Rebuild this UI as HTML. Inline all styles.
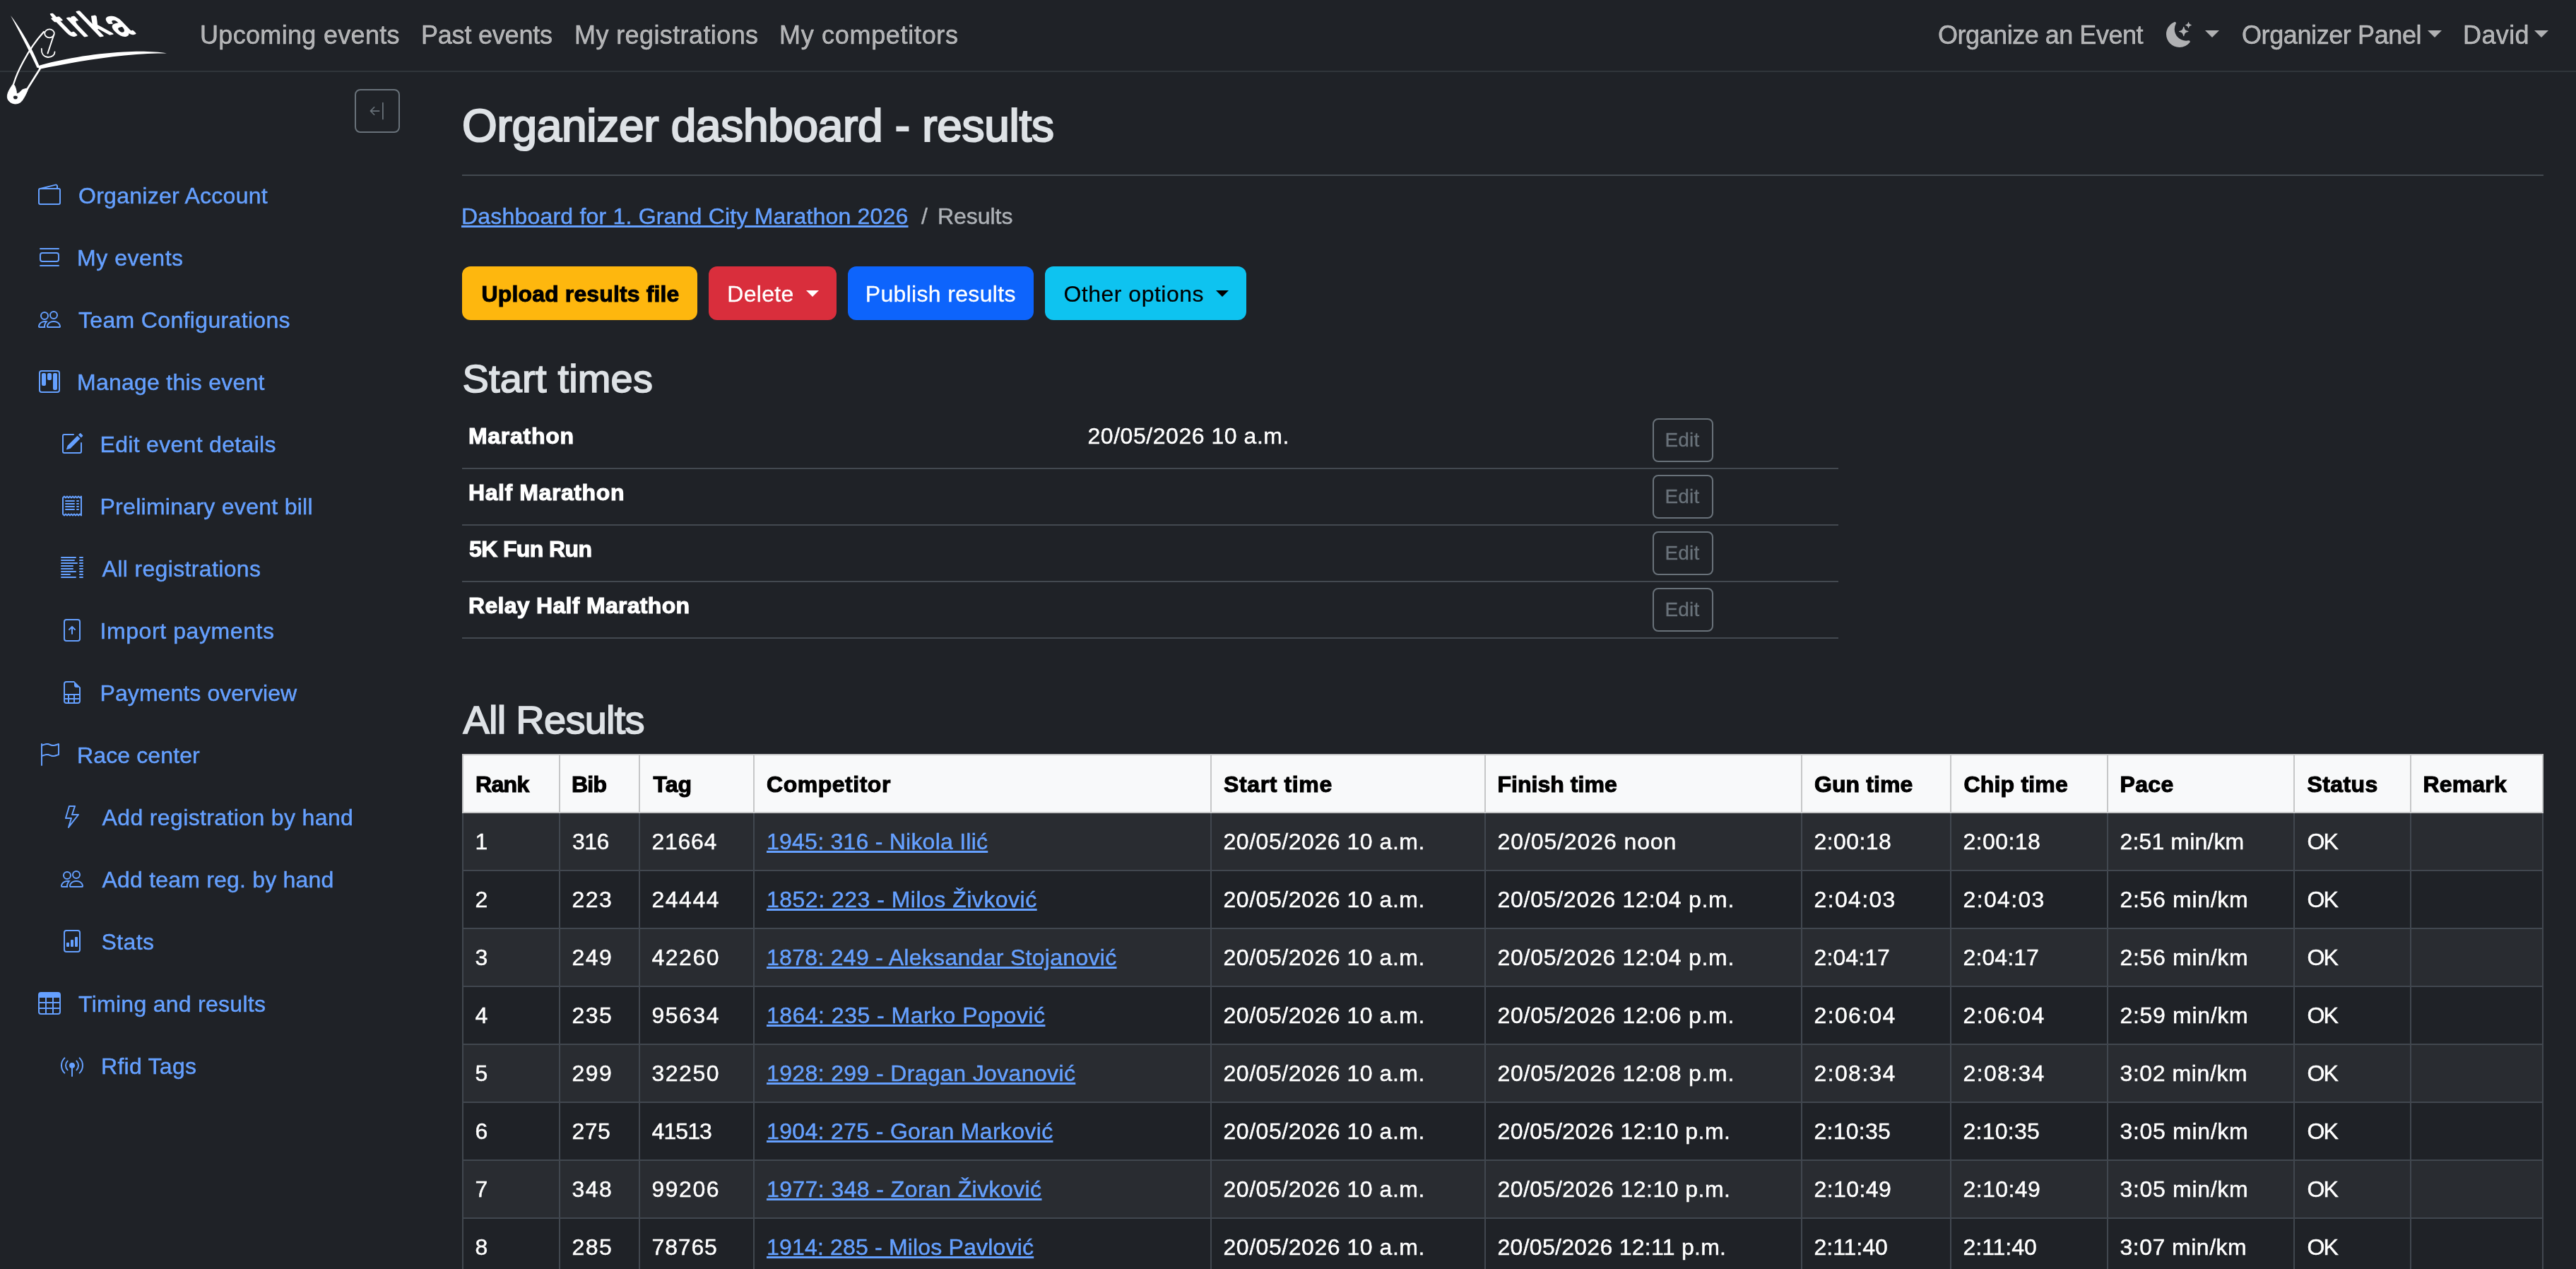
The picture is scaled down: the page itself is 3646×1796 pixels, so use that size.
<!DOCTYPE html><html lang="en"><head><meta charset="utf-8"><title>Organizer dashboard - results</title>
<meta name="viewport" content="width=device-width, initial-scale=1">
<style>
*{box-sizing:border-box}
html,body{margin:0;padding:0}
html{background:#1f2227}
body{width:3646px;height:1796px;overflow:hidden;background:#1f2227;color:#dee2e6;font-family:"Liberation Sans", sans-serif;font-size:32px;line-height:48px;position:relative;-webkit-text-stroke:.45px currentColor;will-change:transform}
a{color:#65a0ff;text-decoration:underline;text-decoration-thickness:3px;text-underline-offset:2px}
ul,ol{list-style:none;margin:0;padding:0}
span,a{white-space:nowrap}
svg.bi{display:block;flex:none}
/* caret */
.caret{display:inline-block;width:0;height:0;border-left:9.6px solid transparent;border-right:9.6px solid transparent;border-top:9.6px solid currentColor;vertical-align:middle}
.caret.c36{border-left-width:10.3px;border-right-width:10.3px;border-top-width:10.5px;margin-left:10px;position:relative;top:-4px}
.caret.c32{margin-left:18px;position:relative;top:-1px;border-left-width:9px;border-right-width:9px;border-top-width:9.5px}
/* top navbar */
.topbar{position:absolute;left:0;top:0;width:3646px;height:102px;border-bottom:2px solid #30353a;font-size:36px;line-height:54px}
.topbar a{color:rgba(255,255,255,.65);text-decoration:none}
.brand{position:absolute;left:0;top:0;z-index:5;display:block;width:260px;height:160px}
.brand svg{display:block}
.navl li{position:absolute;top:23px;white-space:nowrap}
.navl li a{display:block}
.navr li{position:absolute;top:23px;white-space:nowrap}
.navr li a{display:block}
.moonlink{display:flex!important;align-items:center;height:54px}
.moonlink .moon{margin-top:-3px}
.caret.mooncaret{margin-left:19px;top:-2.5px}
/* sidebar */
.sidebar{position:absolute;left:0;top:102px;width:620px}
.collapse{position:absolute;left:502px;top:24px;width:64px;height:62px;border:2px solid #69727a;border-radius:8px;background:transparent;color:#69727a;padding:0;display:flex;align-items:center;justify-content:center}
.menu{position:absolute;left:0;top:131px;width:620px}
.menu li{height:88px}
.menu li a{display:flex;align-items:center;height:88px;text-decoration:none;color:#65a0ff;padding-left:54px}
.menu li.l1 a{padding-left:86px}
.menu li a svg{margin-right:25px;position:relative;top:-1px}
/* main */
main{position:absolute;left:654px;top:102px;width:2946px}
h1,h2{margin:0;font-weight:400;color:#dee2e6;white-space:nowrap}
h1{position:absolute;left:0;top:38px;font-size:64px;line-height:77px;-webkit-text-stroke:2.2px currentColor}
hr{position:absolute;left:0;top:145px;width:2946px;height:2px;border:0;margin:0;background:#434950}
.breadcrumb{position:absolute;left:0;top:180px;display:flex}
.breadcrumb .sep{padding:0 14px 0 17.5px;color:#adb1b6}
.breadcrumb .active{color:#adb1b6}
.btnrow{position:absolute;left:0;top:275px;display:flex;gap:16px}
.btn{display:flex;align-items:center;justify-content:center;height:76px;border-radius:12px;border:0;font-family:inherit;font-size:32px;line-height:48px;text-decoration:none;padding:2px 0 0;-webkit-text-stroke:.3px currentColor}
.btn.warning{background:#feb70e;color:#000;font-weight:700;-webkit-text-stroke:1px currentColor}
.btn.danger{background:#d92e3c;color:#fff}
.btn.primary{background:#0d64fc;color:#fff}
.btn.info{background:#0ec3f0;color:#000;-webkit-text-stroke:.2px currentColor}
h2{font-size:56px;line-height:67px;-webkit-text-stroke:1.6px currentColor}
h2.h-start{position:absolute;left:.5px;top:400px}
h2.h-all{position:absolute;left:1.5px;top:883px}
table{border-collapse:collapse;border-spacing:0}
.starts{position:absolute;left:0;top:482px;width:1948px;color:#fff;border-collapse:separate;border-spacing:0}
.starts th,.starts td{padding:9px 8px 0;border-bottom:2px solid #434950;vertical-align:top;text-align:left;height:80px}
.starts th{font-weight:700;width:877px;-webkit-text-stroke:1.1px currentColor;padding-left:10px}
.starts td.tm{width:808px}
.starts td.ed{padding:8px 0 0}
.btn-sm{display:block;width:86px;height:62px;border:2px solid #69727a;border-radius:8px;background:transparent;color:#69727a;font-family:inherit;font-size:28px;line-height:42px;padding:0 0 0 15.5px;text-align:left;margin-left:0;-webkit-text-stroke:.3px currentColor}
.results{position:absolute;left:0;top:965px;width:2944px;table-layout:fixed;color:#fff}
.results th,.results td{padding:16px 16px;border:2px solid #41474f;text-align:left;vertical-align:top;height:82px;overflow:hidden;white-space:nowrap}
.results thead th{padding:17px 16px 15px;background:#f8f9fa;color:#000;font-weight:700;border-color:#c6c7c8;-webkit-text-stroke:1.1px currentColor}
.results tbody tr:nth-child(odd) td{background:#292c31}

</style></head><body>
<nav class="topbar">
<a class="brand" href="#"><svg class="logo" width="260" height="160" viewBox="0 0 260 160" aria-label="trka logo">
<g fill="#fff" stroke="none">
<path d="M15 22 C24 33 36 53 44 68 C49 78 53 87 56.5 95.5 L52.5 96 C49 88 44 78 39.5 69 C32 54 23 37 15 22Z"/>
<path d="M53 93.5 C85 84 130 76 175 73.5 C200 72 222 73 236 75.5 C220 75.5 200 76 176 78.5 C132 83 88 91 55.5 98 Z"/>
<path stroke="#fff" stroke-width="1" stroke-linejoin="round" d="M18.9 118.2 C15 124 11 130 10.4 135.5 C9.9 141 13.5 145 18.5 146.4 C23 147.8 28.5 146.3 31.5 142 C35 137 38.5 130 40.2 124.4 L31.8 126.8 L26.8 131.8 L23.4 132.8 C23.5 128 22 123 18.9 118.2 Z M18.6 137 C18.2 139.2 19.6 140.8 21.8 140.9 C24 141 25.4 139.6 25.2 137.6 C25 135.8 23.6 135 21.8 135.1 C20 135.2 18.9 135.6 18.6 137 Z" fill-rule="evenodd"/>
</g>
<g fill="none" stroke="#fff" stroke-linecap="round">
<path d="M62 45 C52 56 41 72 33 87 C27 98 22 110 19.5 118" stroke-width="2.3"/>
<path d="M56.5 97.5 L39.5 124.5" stroke-width="2.6"/>
<ellipse cx="70" cy="47.3" rx="6.8" ry="6" stroke-width="1.8"/>
<path d="M76.3 49 L67.5 75.5" stroke-width="2"/>
<path d="M58.8 69 C58.5 75 61 80.5 68 81 C74 81 77.5 77.5 77.5 73.5" stroke-width="1.8"/>
</g>
<text x="0" y="0" rotate="-10" transform="translate(97,51.5) skewX(38)" font-family="'Liberation Sans', sans-serif" font-size="47" font-weight="400" fill="#fff" stroke="#fff" stroke-width="2.8" stroke-linejoin="round" letter-spacing="6.5">trka</text>
</svg></a>
<ul class="navl">
<li style="left:283px"><a style="letter-spacing:0.32px" href="#">Upcoming events</a></li>
<li style="left:596px"><a style="letter-spacing:-0.21px" href="#">Past events</a></li>
<li style="left:813px"><a style="letter-spacing:0.40px" href="#">My registrations</a></li>
<li style="left:1103px"><a style="letter-spacing:0.69px" href="#">My competitors</a></li>
</ul>
<ul class="navr">
<li style="left:2743px"><a style="letter-spacing:-0.48px" href="#">Organize an Event</a></li>
<li style="left:3066px"><a href="#" class="moonlink"><svg class="bi moon" width="36" height="36" viewBox="0 0 16 16" fill="currentColor"><path d="M6 .278a.77.77 0 0 1 .08.858 7.2 7.2 0 0 0-.878 3.46c0 4.021 3.278 7.277 7.318 7.277q.792-.001 1.533-.16a.79.79 0 0 1 .81.316.73.73 0 0 1-.031.893A8.35 8.35 0 0 1 8.344 16C3.734 16 0 12.286 0 7.71 0 4.266 2.114 1.312 5.124.06A.75.75 0 0 1 6 .278"/><path d="M10.794 3.148a.217.217 0 0 1 .412 0l.387 1.162c.173.518.579.924 1.097 1.097l1.162.387a.217.217 0 0 1 0 .412l-1.162.387a1.73 1.73 0 0 0-1.097 1.097l-.387 1.162a.217.217 0 0 1-.412 0l-.387-1.162A1.73 1.73 0 0 0 9.31 6.593l-1.162-.387a.217.217 0 0 1 0-.412l1.162-.387a1.73 1.73 0 0 0 1.097-1.097zM13.863.099a.145.145 0 0 1 .274 0l.258.774c.115.346.386.617.732.732l.774.258a.145.145 0 0 1 0 .274l-.774.258a1.16 1.16 0 0 0-.732.732l-.258.774a.145.145 0 0 1-.274 0l-.258-.774a1.16 1.16 0 0 0-.732-.732l-.774-.258a.145.145 0 0 1 0-.274l.774-.258c.346-.115.617-.386.732-.732z"/></svg><i class="caret c36 mooncaret"></i></a></li>
<li style="left:3173px"><a href="#"><span style="letter-spacing:-0.40px">Organizer Panel</span><i class="caret c36" style="margin-left:9px"></i></a></li>
<li style="left:3486px"><a href="#"><span style="letter-spacing:0.38px">David</span><i class="caret c36" style="margin-left:7px"></i></a></li>
</ul></nav>
<aside class="sidebar">
<button class="collapse" type="button"><svg class="bi" width="28" height="28" viewBox="0 0 16 16" fill="currentColor"><path d="M12.5 15a.5.5 0 0 1-.5-.5v-13a.5.5 0 0 1 1 0v13a.5.5 0 0 1-.5.5M10 8a.5.5 0 0 1-.5.5H3.707l2.147 2.146a.5.5 0 0 1-.708.708l-3-3a.5.5 0 0 1 0-.708l3-3a.5.5 0 1 1 .708.708L3.707 7.5H9.5a.5.5 0 0 1 .5.5"/></svg></button>
<ul class="menu">
<li class="l0"><a href="#"><svg class="bi" width="32" height="32" viewBox="0 0 16 16" fill="currentColor"><path d="M12.136.326A1.5 1.5 0 0 1 14 1.78V3h.5A1.5 1.5 0 0 1 16 4.5v9a1.5 1.5 0 0 1-1.5 1.5h-13A1.5 1.5 0 0 1 0 13.5v-9a1.5 1.5 0 0 1 1.432-1.499zM5.562 3H13V1.78a.5.5 0 0 0-.621-.484zM1.5 4a.5.5 0 0 0-.5.5v9a.5.5 0 0 0 .5.5h13a.5.5 0 0 0 .5-.5v-9a.5.5 0 0 0-.5-.5z"/></svg><span style="letter-spacing:0.28px">Organizer Account</span></a></li>
<li class="l0"><a href="#"><svg class="bi" width="32" height="32" viewBox="0 0 16 16" fill="currentColor"><path d="M3 4.5h10a2 2 0 0 1 2 2v3a2 2 0 0 1-2 2H3a2 2 0 0 1-2-2v-3a2 2 0 0 1 2-2m0 1a1 1 0 0 0-1 1v3a1 1 0 0 0 1 1h10a1 1 0 0 0 1-1v-3a1 1 0 0 0-1-1zM1 2a.5.5 0 0 1 .5-.5h13a.5.5 0 0 1 0 1h-13A.5.5 0 0 1 1 2m0 12a.5.5 0 0 1 .5-.5h13a.5.5 0 0 1 0 1h-13A.5.5 0 0 1 1 14"/></svg><span style="letter-spacing:0.53px;position:relative;left:-2px">My events</span></a></li>
<li class="l0"><a href="#"><svg class="bi" width="32" height="32" viewBox="0 0 16 16" fill="currentColor"><path d="M15 14s1 0 1-1-1-4-5-4-5 3-5 4 1 1 1 1zm-7.978-1L7 12.996c.001-.264.167-1.03.76-1.72C8.312 10.629 9.282 10 11 10c1.717 0 2.687.63 3.24 1.276.593.69.758 1.457.76 1.72l-.008.002-.014.002zM11 7a2 2 0 1 0 0-4 2 2 0 0 0 0 4m3-2a3 3 0 1 1-6 0 3 3 0 0 1 6 0M6.936 9.28a6 6 0 0 0-1.23-.247A7 7 0 0 0 5 9c-4 0-5 3-5 4q0 1 1 1h4.216A2.24 2.24 0 0 1 5 13c0-1.01.377-2.042 1.09-2.904.243-.294.526-.569.846-.816M4.92 10A5.5 5.5 0 0 0 4 13H1c0-.26.164-1.03.76-1.724.545-.636 1.492-1.256 3.16-1.275ZM1.5 5.5a3 3 0 1 1 6 0 3 3 0 0 1-6 0m3-2a2 2 0 1 0 0 4 2 2 0 0 0 0-4"/></svg><span style="letter-spacing:0.34px">Team Configurations</span></a></li>
<li class="l0"><a href="#"><svg class="bi" width="32" height="32" viewBox="0 0 16 16" fill="currentColor"><path d="M13.5 1a1 1 0 0 1 1 1v12a1 1 0 0 1-1 1h-11a1 1 0 0 1-1-1V2a1 1 0 0 1 1-1zm-11-1a2 2 0 0 0-2 2v12a2 2 0 0 0 2 2h11a2 2 0 0 0 2-2V2a2 2 0 0 0-2-2z"/><path d="M6.5 3a1 1 0 0 1 1-1h1a1 1 0 0 1 1 1v3a1 1 0 0 1-1 1h-1a1 1 0 0 1-1-1zm-4 0a1 1 0 0 1 1-1h1a1 1 0 0 1 1 1v7a1 1 0 0 1-1 1h-1a1 1 0 0 1-1-1zm8 0a1 1 0 0 1 1-1h1a1 1 0 0 1 1 1v10a1 1 0 0 1-1 1h-1a1 1 0 0 1-1-1z"/></svg><span style="letter-spacing:0.25px;position:relative;left:-2px">Manage this event</span></a></li>
<li class="l1"><a href="#"><svg class="bi" width="32" height="32" viewBox="0 0 16 16" fill="currentColor"><path d="M15.502 1.94a.5.5 0 0 1 0 .706L14.459 3.69l-2-2L13.502.646a.5.5 0 0 1 .707 0l1.293 1.293zm-1.75 2.456-2-2L4.939 9.21a.5.5 0 0 0-.121.196l-.805 2.414a.25.25 0 0 0 .316.316l2.414-.805a.5.5 0 0 0 .196-.12l6.813-6.814z"/><path d="M1 13.5A1.5 1.5 0 0 0 2.5 15h11a1.5 1.5 0 0 0 1.5-1.5v-6a.5.5 0 0 0-1 0v6a.5.5 0 0 1-.5.5h-11a.5.5 0 0 1-.5-.5v-11a.5.5 0 0 1 .5-.5H9a.5.5 0 0 0 0-1H2.5A1.5 1.5 0 0 0 1 2.5z"/></svg><span style="letter-spacing:0.31px;position:relative;left:-1.5px">Edit event details</span></a></li>
<li class="l1"><a href="#"><svg class="bi" width="32" height="32" viewBox="0 0 16 16" fill="none" stroke="currentColor" stroke-width="1" stroke-linecap="round" stroke-linejoin="round"><path d="M1.5 2.2 L2.50 1.30 L3.50 2.20 L4.50 1.30 L5.50 2.20 L6.50 1.30 L7.50 2.20 L8.50 1.30 L9.50 2.20 L10.50 1.30 L11.50 2.20 L12.50 1.30 L13.50 2.20 L14.50 1.30 L14.5 2.2 L14.5 13.8 L14.50 14.70 L13.50 13.80 L12.50 14.70 L11.50 13.80 L10.50 14.70 L9.50 13.80 L8.50 14.70 L7.50 13.80 L6.50 14.70 L5.50 13.80 L4.50 14.70 L3.50 13.80 L2.50 14.70 L1.5 13.8 Z"/><path d="M3.5 4.5h6M11.5 4.5h1"/><path d="M3.5 6.5h6M11.5 6.5h1"/><path d="M3.5 8.5h6M11.5 8.5h1"/><path d="M3.5 10.5h6M11.5 10.5h1"/></svg><span style="letter-spacing:0.28px;position:relative;left:-1.5px">Preliminary event bill</span></a></li>
<li class="l1"><a href="#"><svg class="bi" width="32" height="32" viewBox="0 0 16 16" fill="none" stroke="currentColor" stroke-width="1" stroke-linecap="round"><path d="M.5 0.5H10.5M13.5 0.5h2M.5 2.5H9.5M13.5 2.5h2M.5 4.5H11.5M13.5 4.5h2M.5 6.5H8.5M13.5 6.5h2M.5 8.5H8.5M13.5 8.5h2M.5 10.5H10.5M13.5 10.5h2M.5 12.5H6.5M13.5 12.5h2M.5 14.5H10.5M13.5 14.5h2"/></svg><span style="letter-spacing:0.36px;position:relative;left:1.5px">All registrations</span></a></li>
<li class="l1"><a href="#"><svg class="bi" width="32" height="32" viewBox="0 0 16 16" fill="currentColor"><path d="M8 11a.5.5 0 0 0 .5-.5V6.707l1.146 1.147a.5.5 0 0 0 .708-.708l-2-2a.5.5 0 0 0-.708 0l-2 2a.5.5 0 1 0 .708.708L7.5 6.707V10.5a.5.5 0 0 0 .5.5"/><path d="M4 0a2 2 0 0 0-2 2v12a2 2 0 0 0 2 2h8a2 2 0 0 0 2-2V2a2 2 0 0 0-2-2zm0 1h8a1 1 0 0 1 1 1v12a1 1 0 0 1-1 1H4a1 1 0 0 1-1-1V2a1 1 0 0 1 1-1"/></svg><span style="letter-spacing:0.59px;position:relative;left:-1.5px">Import payments</span></a></li>
<li class="l1"><a href="#"><svg class="bi" width="32" height="32" viewBox="0 0 16 16" fill="currentColor"><path d="M14 14V4.5L9.5 0H4a2 2 0 0 0-2 2v12a2 2 0 0 0 2 2h8a2 2 0 0 0 2-2M9.5 3A1.5 1.5 0 0 0 11 4.5h2V9H3V2a1 1 0 0 1 1-1h5.5zM3 12v-2h2v2zm0 1h2v2H4a1 1 0 0 1-1-1zm3 2v-2h3v2zm4 0v-2h3v1a1 1 0 0 1-1 1zm3-3h-3v-2h3zm-7 0v-2h3v2z"/></svg><span style="letter-spacing:0.08px;position:relative;left:-1.5px">Payments overview</span></a></li>
<li class="l0"><a href="#"><svg class="bi" width="32" height="32" viewBox="0 0 16 16" fill="currentColor"><path d="M14.778.085A.5.5 0 0 1 15 .5V8a.5.5 0 0 1-.314.464L14.5 8l.186.464-.003.001-.006.003-.023.009a12 12 0 0 1-.397.15c-.264.095-.631.223-1.047.35-.816.252-1.879.523-2.71.523-.847 0-1.548-.28-2.158-.525l-.028-.01C7.68 8.71 7.14 8.5 6.5 8.5c-.7 0-1.638.23-2.437.477A20 20 0 0 0 3 9.342V15.5a.5.5 0 0 1-1 0V.5a.5.5 0 0 1 1 0v.282c.226-.079.496-.17.79-.26C4.606.272 5.67 0 6.5 0c.84 0 1.524.277 2.121.519l.043.018C9.286.788 9.828 1 10.5 1c.7 0 1.638-.23 2.437-.477a20 20 0 0 0 1.349-.476l.019-.007.004-.002h.001M14 1.221c-.22.078-.48.167-.766.255-.81.252-1.872.523-2.734.523-.886 0-1.592-.286-2.203-.534l-.008-.003C7.662 1.21 7.139 1 6.5 1c-.669 0-1.606.229-2.415.478A21 21 0 0 0 3 1.845v6.433c.22-.078.48-.167.766-.255C4.576 7.77 5.638 7.5 6.5 7.5c.847 0 1.548.28 2.158.525l.028.01C9.32 8.29 9.86 8.5 10.5 8.5c.668 0 1.606-.229 2.415-.478A21 21 0 0 0 14 7.655V1.222z"/></svg><span style="letter-spacing:0.12px;position:relative;left:-2px">Race center</span></a></li>
<li class="l1"><a href="#"><svg class="bi" width="32" height="32" viewBox="0 0 16 16" fill="currentColor"><path d="M5.52.359A.5.5 0 0 1 6 0h4a.5.5 0 0 1 .474.658L8.694 6H12.5a.5.5 0 0 1 .395.807l-7 9a.5.5 0 0 1-.873-.454L6.823 9.5H3.5a.5.5 0 0 1-.48-.641zM6.374 1 4.168 8.5H7.5a.5.5 0 0 1 .478.647L6.78 13.04 11.478 7H8a.5.5 0 0 1-.474-.658L9.306 1z"/></svg><span style="letter-spacing:0.37px;position:relative;left:1.5px">Add registration by hand</span></a></li>
<li class="l1"><a href="#"><svg class="bi" width="32" height="32" viewBox="0 0 16 16" fill="currentColor"><path d="M15 14s1 0 1-1-1-4-5-4-5 3-5 4 1 1 1 1zm-7.978-1L7 12.996c.001-.264.167-1.03.76-1.72C8.312 10.629 9.282 10 11 10c1.717 0 2.687.63 3.24 1.276.593.69.758 1.457.76 1.72l-.008.002-.014.002zM11 7a2 2 0 1 0 0-4 2 2 0 0 0 0 4m3-2a3 3 0 1 1-6 0 3 3 0 0 1 6 0M6.936 9.28a6 6 0 0 0-1.23-.247A7 7 0 0 0 5 9c-4 0-5 3-5 4q0 1 1 1h4.216A2.24 2.24 0 0 1 5 13c0-1.01.377-2.042 1.09-2.904.243-.294.526-.569.846-.816M4.92 10A5.5 5.5 0 0 0 4 13H1c0-.26.164-1.03.76-1.724.545-.636 1.492-1.256 3.16-1.275ZM1.5 5.5a3 3 0 1 1 6 0 3 3 0 0 1-6 0m3-2a2 2 0 1 0 0 4 2 2 0 0 0 0-4"/></svg><span style="letter-spacing:0.20px;position:relative;left:1.5px">Add team reg. by hand</span></a></li>
<li class="l1"><a href="#"><svg class="bi" width="32" height="32" viewBox="0 0 16 16" fill="currentColor"><path d="M4.5 12a.5.5 0 0 1-.5-.5v-2a.5.5 0 0 1 .5-.5h1a.5.5 0 0 1 .5.5v2a.5.5 0 0 1-.5.5zm3 0a.5.5 0 0 1-.5-.5v-4a.5.5 0 0 1 .5-.5h1a.5.5 0 0 1 .5.5v4a.5.5 0 0 1-.5.5zm3 0a.5.5 0 0 1-.5-.5v-6a.5.5 0 0 1 .5-.5h1a.5.5 0 0 1 .5.5v6a.5.5 0 0 1-.5.5z"/><path d="M4 0a2 2 0 0 0-2 2v12a2 2 0 0 0 2 2h8a2 2 0 0 0 2-2V2a2 2 0 0 0-2-2zm0 1h8a1 1 0 0 1 1 1v12a1 1 0 0 1-1 1H4a1 1 0 0 1-1-1V2a1 1 0 0 1 1-1"/></svg><span style="letter-spacing:0.41px;position:relative;left:0.5px">Stats</span></a></li>
<li class="l0"><a href="#"><svg class="bi" width="32" height="32" viewBox="0 0 16 16" fill="currentColor"><path d="M0 2a2 2 0 0 1 2-2h12a2 2 0 0 1 2 2v12a2 2 0 0 1-2 2H2a2 2 0 0 1-2-2zm15 2h-4v3h4zm0 4h-4v3h4zm0 4h-4v3h3a1 1 0 0 0 1-1zm-5 3v-3H6v3zm-5 0v-3H1v2a1 1 0 0 0 1 1zm-4-4h4V8H1zm0-4h4V4H1zm5-3v3h4V4zm4 4H6v3h4z"/></svg><span style="letter-spacing:0.28px">Timing and results</span></a></li>
<li class="l1"><a href="#"><svg class="bi" width="32" height="32" viewBox="0 0 16 16" fill="currentColor"><path d="M3.05 3.05a7 7 0 0 0 0 9.9.5.5 0 0 1-.707.707 8 8 0 0 1 0-11.314.5.5 0 0 1 .707.707m2.122 2.122a4 4 0 0 0 0 5.656.5.5 0 1 1-.708.708 5 5 0 0 1 0-7.072.5.5 0 0 1 .708.708m5.656-.708a.5.5 0 0 1 .708 0 5 5 0 0 1 0 7.072.5.5 0 1 1-.708-.708 4 4 0 0 0 0-5.656.5.5 0 0 1 0-.708m2.122-2.12a.5.5 0 0 1 .707 0 8 8 0 0 1 0 11.313.5.5 0 0 1-.707-.707 7 7 0 0 0 0-9.9.5.5 0 0 1 0-.707zM6 8a2 2 0 1 1 2.5 1.937V15.5a.5.5 0 0 1-1 0V9.937A2 2 0 0 1 6 8"/></svg><span style="letter-spacing:0.27px">Rfid Tags</span></a></li>
</ul></aside>
<main>
<h1 style="letter-spacing:-0.31px">Organizer dashboard - results</h1>
<hr>
<ol class="breadcrumb"><li><a style="letter-spacing:0.20px;position:relative;left:-1px" href="#">Dashboard for 1. Grand City Marathon 2026</a></li><li class="sep">/</li><li class="active"><span style="letter-spacing:-0.03px">Results</span></li></ol>
<div class="btnrow">
<a class="btn warning" href="#" style="width:333px"><span style="letter-spacing:0.13px;position:relative;left:1px">Upload results file</span></a>
<button class="btn danger" type="button" style="width:181px"><span style="letter-spacing:0.30px;position:relative;left:1px">Delete</span><i class="caret c32"></i></button>
<a class="btn primary" href="#" style="width:262.5px"><span style="letter-spacing:0.33px">Publish results</span></a>
<button class="btn info" type="button" style="width:285.5px"><span style="letter-spacing:0.51px;position:relative;left:1.5px">Other options</span><i class="caret c32"></i></button>
</div>
<h2 class="h-start" style="letter-spacing:0.18px">Start times</h2>
<table class="starts"><tbody>
<tr><th><span style="letter-spacing:0.71px;position:relative;left:-1px">Marathon</span></th><td class="tm"><span style="letter-spacing:0.54px;position:relative;left:0.5px">20/05/2026 10 a.m.</span></td><td class="ed"><button class="btn-sm" type="button" disabled><span style="letter-spacing:0.18px">Edit</span></button></td></tr>
<tr><th><span style="letter-spacing:0.59px;position:relative;left:-1px">Half Marathon</span></th><td class="tm"></td><td class="ed"><button class="btn-sm" type="button" disabled><span style="letter-spacing:0.18px">Edit</span></button></td></tr>
<tr><th><span style="letter-spacing:-0.62px">5K Fun Run</span></th><td class="tm"></td><td class="ed"><button class="btn-sm" type="button" disabled><span style="letter-spacing:0.18px">Edit</span></button></td></tr>
<tr><th><span style="letter-spacing:0.30px;position:relative;left:-1px">Relay Half Marathon</span></th><td class="tm"></td><td class="ed"><button class="btn-sm" type="button" disabled><span style="letter-spacing:0.18px">Edit</span></button></td></tr>
</tbody></table>
<h2 class="h-all" style="letter-spacing:-0.74px">All Results</h2>
<table class="results"><colgroup>
<col style="width:137px">
<col style="width:113px">
<col style="width:162px">
<col style="width:647px">
<col style="width:388px">
<col style="width:448px">
<col style="width:211px">
<col style="width:222px">
<col style="width:264px">
<col style="width:165px">
<col style="width:187px">
</colgroup><thead><tr>
<th><span style="letter-spacing:-0.68px;position:relative;left:1px">Rank</span></th>
<th><span style="letter-spacing:-0.80px">Bib</span></th>
<th><span style="letter-spacing:-0.03px;position:relative;left:2.5px">Tag</span></th>
<th><span style="letter-spacing:0.52px;position:relative;left:1px">Competitor</span></th>
<th><span style="letter-spacing:0.62px;position:relative;left:1px">Start time</span></th>
<th><span style="letter-spacing:0.03px;position:relative;left:0.5px">Finish time</span></th>
<th><span style="letter-spacing:0.08px;position:relative;left:1px">Gun time</span></th>
<th><span style="letter-spacing:0.18px;position:relative;left:1.5px">Chip time</span></th>
<th><span style="letter-spacing:0.32px;position:relative;left:0.5px">Pace</span></th>
<th><span style="letter-spacing:0.38px;position:relative;left:1.5px">Status</span></th>
<th><span style="letter-spacing:0.16px;position:relative;left:0.5px">Remark</span></th>
</tr></thead><tbody>
<tr><td><span style="letter-spacing:0.27px;position:relative;left:0.5px">1</span></td><td><span style="letter-spacing:-0.52px;position:relative;left:1px">316</span></td><td><span style="letter-spacing:0.72px;position:relative;left:0.5px">21664</span></td><td><a style="letter-spacing:0.24px;position:relative;left:1px" href="#">1945: 316 - Nikola Ilić</a></td><td><span style="letter-spacing:0.54px;position:relative;left:0.5px">20/05/2026 10 a.m.</span></td><td><span style="letter-spacing:0.90px;position:relative;left:0.5px">20/05/2026 noon</span></td><td><span style="letter-spacing:0.43px;position:relative;left:0.5px">2:00:18</span></td><td><span style="letter-spacing:0.43px;position:relative;left:0.5px">2:00:18</span></td><td><span style="letter-spacing:0.14px;position:relative;left:0.5px">2:51 min/km</span></td><td><span style="letter-spacing:-2.00px;position:relative;left:1.5px">OK</span></td><td></td></tr>
<tr><td><span style="letter-spacing:0.27px;position:relative;left:0.5px">2</span></td><td><span style="letter-spacing:1.48px;position:relative;left:0.5px">223</span></td><td><span style="letter-spacing:1.50px;position:relative;left:0.5px">24444</span></td><td><a style="letter-spacing:0.49px;position:relative;left:1px" href="#">1852: 223 - Milos Živković</a></td><td><span style="letter-spacing:0.54px;position:relative;left:0.5px">20/05/2026 10 a.m.</span></td><td><span style="letter-spacing:0.73px;position:relative;left:0.5px">20/05/2026 12:04 p.m.</span></td><td><span style="letter-spacing:1.35px;position:relative;left:0.5px">2:04:03</span></td><td><span style="letter-spacing:1.35px;position:relative;left:0.5px">2:04:03</span></td><td><span style="letter-spacing:0.69px;position:relative;left:0.5px">2:56 min/km</span></td><td><span style="letter-spacing:-2.00px;position:relative;left:1.5px">OK</span></td><td></td></tr>
<tr><td><span style="letter-spacing:0.27px;position:relative;left:0.5px">3</span></td><td><span style="letter-spacing:1.50px;position:relative;left:0.5px">249</span></td><td><span style="letter-spacing:1.50px;position:relative;left:0.5px">42260</span></td><td><a style="letter-spacing:0.30px;position:relative;left:1px" href="#">1878: 249 - Aleksandar Stojanović</a></td><td><span style="letter-spacing:0.54px;position:relative;left:0.5px">20/05/2026 10 a.m.</span></td><td><span style="letter-spacing:0.73px;position:relative;left:0.5px">20/05/2026 12:04 p.m.</span></td><td><span style="letter-spacing:0.10px;position:relative;left:0.5px">2:04:17</span></td><td><span style="letter-spacing:0.10px;position:relative;left:0.5px">2:04:17</span></td><td><span style="letter-spacing:0.69px;position:relative;left:0.5px">2:56 min/km</span></td><td><span style="letter-spacing:-2.00px;position:relative;left:1.5px">OK</span></td><td></td></tr>
<tr><td><span style="letter-spacing:0.27px;position:relative;left:0.5px">4</span></td><td><span style="letter-spacing:1.48px;position:relative;left:0.5px">235</span></td><td><span style="letter-spacing:1.50px;position:relative;left:0.5px">95634</span></td><td><a style="letter-spacing:0.48px;position:relative;left:1px" href="#">1864: 235 - Marko Popović</a></td><td><span style="letter-spacing:0.54px;position:relative;left:0.5px">20/05/2026 10 a.m.</span></td><td><span style="letter-spacing:0.73px;position:relative;left:0.5px">20/05/2026 12:06 p.m.</span></td><td><span style="letter-spacing:1.35px;position:relative;left:0.5px">2:06:04</span></td><td><span style="letter-spacing:1.35px;position:relative;left:0.5px">2:06:04</span></td><td><span style="letter-spacing:0.69px;position:relative;left:0.5px">2:59 min/km</span></td><td><span style="letter-spacing:-2.00px;position:relative;left:1.5px">OK</span></td><td></td></tr>
<tr><td><span style="letter-spacing:0.27px;position:relative;left:0.5px">5</span></td><td><span style="letter-spacing:1.50px;position:relative;left:0.5px">299</span></td><td><span style="letter-spacing:1.50px;position:relative;left:0.5px">32250</span></td><td><a style="letter-spacing:0.37px;position:relative;left:1px" href="#">1928: 299 - Dragan Jovanović</a></td><td><span style="letter-spacing:0.54px;position:relative;left:0.5px">20/05/2026 10 a.m.</span></td><td><span style="letter-spacing:0.73px;position:relative;left:0.5px">20/05/2026 12:08 p.m.</span></td><td><span style="letter-spacing:1.35px;position:relative;left:0.5px">2:08:34</span></td><td><span style="letter-spacing:1.35px;position:relative;left:0.5px">2:08:34</span></td><td><span style="letter-spacing:0.59px;position:relative;left:0.5px">3:02 min/km</span></td><td><span style="letter-spacing:-2.00px;position:relative;left:1.5px">OK</span></td><td></td></tr>
<tr><td><span style="letter-spacing:0.27px;position:relative;left:0.5px">6</span></td><td><span style="letter-spacing:0.48px;position:relative;left:0.5px">275</span></td><td><span style="letter-spacing:-0.91px;position:relative;left:0.5px">41513</span></td><td><a style="letter-spacing:0.34px;position:relative;left:1px" href="#">1904: 275 - Goran Marković</a></td><td><span style="letter-spacing:0.54px;position:relative;left:0.5px">20/05/2026 10 a.m.</span></td><td><span style="letter-spacing:0.46px;position:relative;left:0.5px">20/05/2026 12:10 p.m.</span></td><td><span style="letter-spacing:0.26px;position:relative;left:0.5px">2:10:35</span></td><td><span style="letter-spacing:0.26px;position:relative;left:0.5px">2:10:35</span></td><td><span style="letter-spacing:0.69px;position:relative;left:0.5px">3:05 min/km</span></td><td><span style="letter-spacing:-2.00px;position:relative;left:1.5px">OK</span></td><td></td></tr>
<tr><td><span style="letter-spacing:0.27px;position:relative;left:0.5px">7</span></td><td><span style="letter-spacing:1.50px;position:relative;left:0.5px">348</span></td><td><span style="letter-spacing:1.50px;position:relative;left:0.5px">99206</span></td><td><a style="letter-spacing:0.41px;position:relative;left:1px" href="#">1977: 348 - Zoran Živković</a></td><td><span style="letter-spacing:0.54px;position:relative;left:0.5px">20/05/2026 10 a.m.</span></td><td><span style="letter-spacing:0.46px;position:relative;left:0.5px">20/05/2026 12:10 p.m.</span></td><td><span style="letter-spacing:0.43px;position:relative;left:0.5px">2:10:49</span></td><td><span style="letter-spacing:0.43px;position:relative;left:0.5px">2:10:49</span></td><td><span style="letter-spacing:0.69px;position:relative;left:0.5px">3:05 min/km</span></td><td><span style="letter-spacing:-2.00px;position:relative;left:1.5px">OK</span></td><td></td></tr>
<tr><td><span style="letter-spacing:0.27px;position:relative;left:0.5px">8</span></td><td><span style="letter-spacing:1.48px;position:relative;left:0.5px">285</span></td><td><span style="letter-spacing:0.84px;position:relative;left:0.5px">78765</span></td><td><a style="letter-spacing:0.18px;position:relative;left:1px" href="#">1914: 285 - Milos Pavlović</a></td><td><span style="letter-spacing:0.54px;position:relative;left:0.5px">20/05/2026 10 a.m.</span></td><td><span style="letter-spacing:0.28px;position:relative;left:0.5px">20/05/2026 12:11 p.m.</span></td><td><span style="letter-spacing:-0.01px;position:relative;left:0.5px">2:11:40</span></td><td><span style="letter-spacing:-0.01px;position:relative;left:0.5px">2:11:40</span></td><td><span style="letter-spacing:0.49px;position:relative;left:0.5px">3:07 min/km</span></td><td><span style="letter-spacing:-2.00px;position:relative;left:1.5px">OK</span></td><td></td></tr>
</tbody></table>
</main>
<script>(function(){var d=window.devicePixelRatio||1;if(d>1&&Math.abs(window.innerWidth*d-3646)<6){document.documentElement.style.zoom=1/d}})();</script>
</body></html>
